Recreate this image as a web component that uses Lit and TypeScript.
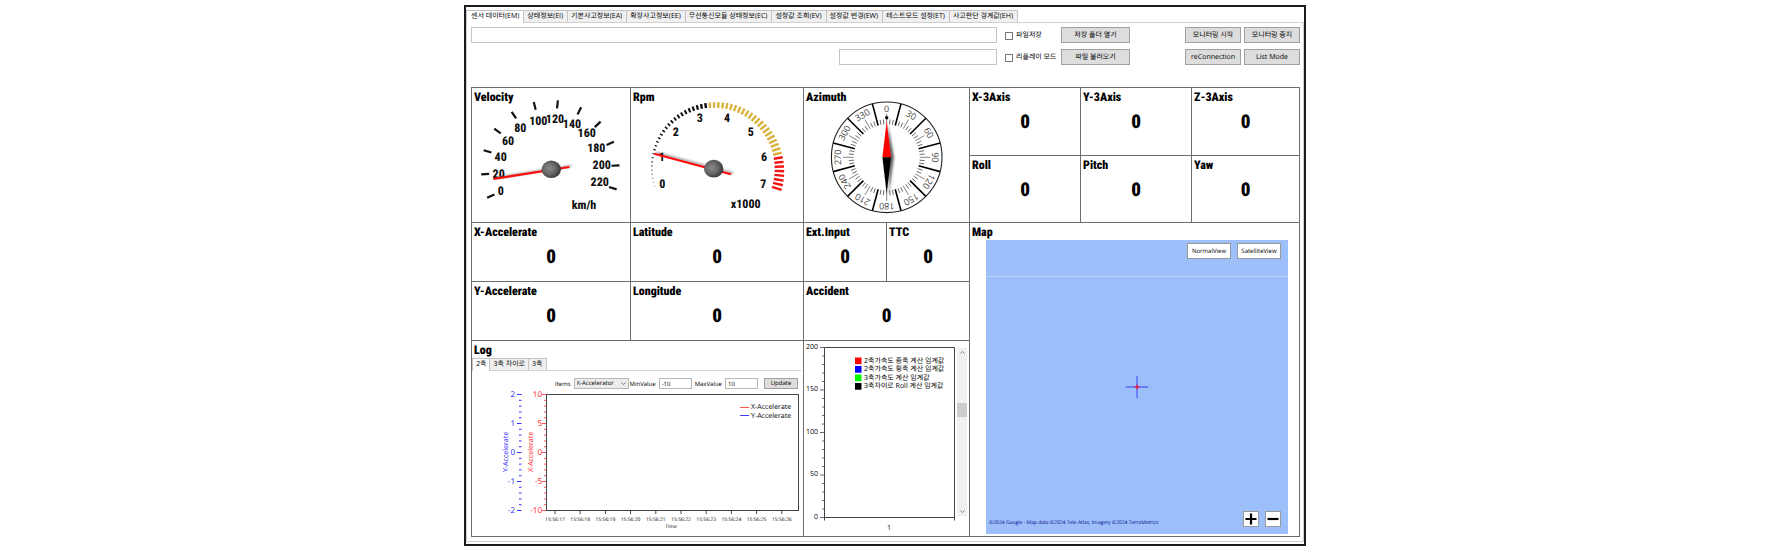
import { LitElement, html, svg, css } from "lit";
import { customElement, state } from "lit/decorators.js";

const polar = (cx: number, cy: number, r: number, deg: number) => {
  const a = (deg * Math.PI) / 180;
  return [cx + r * Math.cos(a), cy + r * Math.sin(a)];
};

const tick = (cx: number, cy: number, r1: number, r2: number, deg: number, color: string, width: number) => {
  const [x1, y1] = polar(cx, cy, r1, deg);
  const [x2, y2] = polar(cx, cy, r2, deg);
  return svg`<line x1=${x1} y1=${y1} x2=${x2} y2=${y2} stroke=${color} stroke-width=${width} />`;
};

const range = (n: number) => Array.from({ length: n }, (_, i) => i);

const TABS = [
  "센서 데이터(EM)",
  "상태정보(EI)",
  "기본사고정보(EA)",
  "확장사고정보(EE)",
  "무선통신모듈 상태정보(EC)",
  "설정값 조회(EV)",
  "설정값 변경(EW)",
  "테스트모드 설정(ET)",
  "사고판단 경계값(EH)",
];

const LOG_TABS = ["2축", "3축 자이로", "3축"];

const AXES = ["X-3Axis", "Y-3Axis", "Z-3Axis", "Roll", "Pitch", "Yaw"];

const SPEED_LABELS: [number, number, number][] = [
  [0, 28.7, 103], [20, 26.7, 85.7], [40, 28.7, 68.7], [60, 36, 52.7],
  [80, 48.3, 39.7], [100, 66.3, 32.7], [120, 83, 31], [140, 100, 35.7],
  [160, 114.7, 45.3], [180, 124.3, 60.3], [200, 129.7, 77], [220, 127.7, 94.3],
];

const RPM_LABELS: [number, number, number][] = [
  [0, 31.3, 96.3], [1, 30.7, 68.7], [2, 44.7, 44.3], [3, 68.7, 30],
  [4, 96, 30], [5, 119.7, 44.3], [6, 133, 68.7], [7, 132.3, 96],
];

const THRESHOLDS = [
  ["#ff0000", "2축가속도 종축 계산 임계값"],
  ["#0000ff", "2축가속도 횡축 계산 임계값"],
  ["#00ff00", "3축가속도 계산 임계값"],
  ["#000000", "3축자이로 Roll 계산 임계값"],
];

const gaugeStyles = css`
  :host {
    display: block;
  }
  .dial {
    display: block;
    width: 100%;
    height: auto;
    overflow: hidden;
  }
  .num {
    font: 800 12px "Impact", "Roboto Condensed", "Roboto", sans-serif;
    text-anchor: middle;
    dominant-baseline: central;
    fill: #111;
  }
  .bearing {
    font: 9px "Open Sans", "Noto Sans", sans-serif;
    text-anchor: middle;
    dominant-baseline: central;
    fill: #444;
  }
`;

const defs = svg`
  <defs>
    <radialGradient id="hub" cx="0.4" cy="0.45" r="0.62">
      <stop offset="0" stop-color="#8a8a8a" />
      <stop offset="0.55" stop-color="#666" />
      <stop offset="1" stop-color="#333" />
    </radialGradient>
    <filter id="soft" x="-50%" y="-50%" width="200%" height="200%">
      <feGaussianBlur stdDeviation="1.3" />
    </filter>
  </defs>`;

const needle = (x1: number, y1: number, x2: number, y2: number) => svg`
  <line x1=${x1 + 2} y1=${y1 - 1} x2=${x2 + 2} y2=${y2 - 1} stroke="#000" stroke-opacity="0.4"
    stroke-width="2" filter="url(#soft)" />
  <line x1=${x1} y1=${y1} x2=${x2} y2=${y2} stroke="#ff0a0a" stroke-width="2.2" />`;

@customElement("speed-gauge")
class SpeedGauge extends LitElement {
  static styles = gaugeStyles;
  render() {
    return html`<svg class="dial" viewBox="0 0 158 134" role="img" aria-label="Velocity">
      ${defs}
      ${range(12).map((i) => tick(78.3, 81.3, 61.3, 69.3, 155.7 + i * 20.1, "#111", 2.2))}
      ${SPEED_LABELS.map(([v, x, y]) => svg`<text class="num" x=${x} y=${y}>${v}</text>`)}
      <text class="num" x="112" y="116.7">km/h</text>
      ${needle(21.3, 91, 97.3, 79)}
      <ellipse cx="79.3" cy="81.3" rx="9.7" ry="8.7" fill="url(#hub)" />
    </svg>`;
  }
}

@customElement("rpm-gauge")
class RpmGauge extends LitElement {
  static styles = gaugeStyles;
  render() {
    const color = (i: number) => (i < 27 ? "#111" : i < 49 ? "#d8b23c" : "#f51414");
    return html`<svg class="dial" viewBox="0 0 172 134" role="img" aria-label="Rpm">
      ${defs}
      ${range(57).map((i) =>
        tick(82.7, 80.7, 61, 61.8 + (i * 9.4) / 56, 163.4 + i * 3.82, color(i), 0.5 + (i > 26 ? 1.9 : i * 0.075)))}
      ${RPM_LABELS.map(([v, x, y]) => svg`<text class="num" x=${x} y=${y}>${v}</text>`)}
      <text class="num" x="114.7" y="116">x1000</text>
      ${needle(23.3, 65.7, 100, 86.3)}
      <ellipse cx="82.7" cy="80.7" rx="9.7" ry="8.9" fill="url(#hub)" />
    </svg>`;
  }
}

@customElement("azimuth-gauge")
class AzimuthGauge extends LitElement {
  static styles = gaugeStyles;
  render() {
    const c = [82.7, 69.3];
    return html`<svg class="dial" viewBox="0 0 165 134" role="img" aria-label="Azimuth">
      ${defs}
      <circle cx=${c[0]} cy=${c[1]} r="55.3" fill="#fff" stroke="#222" stroke-width="1.1" />
      ${range(72).map((i) => {
        const deg = i * 5;
        if (deg % 30 === 15) return tick(c[0], c[1], 33, 55.3, deg, "#000", 1.6);
        if (deg % 30 === 0) return tick(c[0], c[1], 33, 43.5, deg, "#666", 0.8);
        return tick(c[0], c[1], 33, 38, deg, "#444", 0.8);
      })}
      ${range(12).map((i) => svg`<g transform="rotate(${i * 30} ${c[0]} ${c[1]})">
        <text class="bearing" x=${c[0]} y="20.3">${i * 30}</text></g>`)}
      <circle cx=${c[0]} cy="29.7" r="1.7" fill="#000" />
      <path d="M84 36 L90 69 L85 106 Z" fill="#000" fill-opacity="0.6" filter="url(#soft)" />
      <path d="M82.7 33 L87 69.3 H78.4 Z" fill="#f00" />
      <path d="M78.4 69.3 H87 L82.7 106 Z" fill="#000" />
    </svg>`;
  }
}

@customElement("log-chart")
class LogChart extends LitElement {
  static styles = css`
    :host {
      display: block;
    }
    .plot {
      display: block;
      width: 100%;
      height: auto;
      overflow: visible;
    }
    .lbl {
      font: 7px "Open Sans", "Noto Sans", sans-serif;
      dominant-baseline: central;
    }
    .small {
      font-size: 5px;
    }
    .val {
      font-size: 8px;
    }
    .end {
      text-anchor: end;
    }
    .mid {
      text-anchor: middle;
    }
    .red {
      fill: #ff1010;
    }
    .blue {
      fill: #1a1aff;
    }
    .dark {
      fill: #000;
    }
  `;
  render() {
    const y = (i: number) => 4 + (i * 116) / 20;
    return html`<svg class="plot" viewBox="0 0 331 145" role="img" aria-label="Accelerate log">
      <rect x="74.5" y="4.5" width="252" height="116" fill="#fff" stroke="#444" />
      ${range(21).map((i) => svg`
        <line x1=${i % 5 ? 47 : 45} x2="49.5" y1=${y(i) + 0.5} y2=${y(i) + 0.5} stroke="#3030ff" />
        <line x1=${i % 5 ? 72 : 70} x2="74" y1=${y(i) + 0.5} y2=${y(i) + 0.5} stroke="#ff2a2a" stroke-width="0.8" />`)}
      ${[2, 1, 0, -1, -2].map((v, i) => svg`<text class="lbl val blue end" x="43" y=${4 + i * 29}>${v}</text>`)}
      ${[10, 5, 0, -5, -10].map((v, i) => svg`<text class="lbl val red end" x="70" y=${4 + i * 29}>${v}</text>`)}
      <g transform="translate(34 62) rotate(-90)"><text class="lbl blue mid">Y-Accelerate</text></g>
      <g transform="translate(59 62) rotate(-90)"><text class="lbl red mid">X-Accelerate</text></g>
      ${range(10).map((i) => svg`
        <line x1=${83 + i * 25.2} x2=${83 + i * 25.2} y1="120" y2="124" stroke="#444" />
        <text class="lbl small dark mid" x=${83 + i * 25.2} y="130">15:56:${17 + i}</text>`)}
      <text class="lbl small dark mid" x="199" y="137">Time</text>
      <line x1="268" x2="277" y1="17.5" y2="17.5" stroke="#ff5050" />
      <text class="lbl dark" x="279" y="17">X-Accelerate</text>
      <line x1="268" x2="277" y1="25.5" y2="25.5" stroke="#4040ff" />
      <text class="lbl dark" x="279" y="26">Y-Accelerate</text>
    </svg>`;
  }
}

@customElement("threshold-chart")
class ThresholdChart extends LitElement {
  static styles = css`
    :host {
      display: block;
    }
    .plot {
      display: block;
      width: 100%;
      height: auto;
      overflow: visible;
    }
    .lbl {
      font: 7px "Open Sans", "Noto Sans", "Noto Sans CJK KR", sans-serif;
      dominant-baseline: central;
      fill: #000;
    }
    .end {
      text-anchor: end;
    }
    .mid {
      text-anchor: middle;
    }
  `;
  render() {
    return html`<svg class="plot" viewBox="0 0 152 195" role="img" aria-label="Thresholds">
      <path d="M20.5 179.5 V6.5 H150.5 V179.5 M20.5 176.5 H150.5" fill="none" stroke="#444" />
      ${range(21).map((i) => svg`<line x1=${i % 5 ? 18 : 16} x2="20" y1=${6.5 + i * 8.5} y2=${6.5 + i * 8.5}
        stroke="#444" stroke-width="0.8" />`)}
      ${[200, 150, 100, 50, 0].map((v, i) => svg`<text class="lbl end" x="14" y=${6 + i * 42.5}>${v}</text>`)}
      <text class="lbl mid" x="85" y="187">1</text>
      ${THRESHOLDS.map(([c, t], i) => svg`
        <rect x="51" y=${16.5 + i * 8.5} width="6.5" height="6.7" fill=${c} />
        <text class="lbl" x="60" y=${20 + i * 8.5}>${t}</text>`)}
    </svg>`;
  }
}

@customElement("app-root")
class AppRoot extends LitElement {
  @state() private tab = 0;
  @state() private logTab = 0;

  static styles = css`
    :host {
      display: block;
      padding: 5px 7px 5px 5px;
      background: #fff;
      color: #000;
      font: 7px/12px "Open Sans", "Noto Sans", "Noto Sans CJK KR", sans-serif;
      text-rendering: geometricPrecision;
    }
    * {
      box-sizing: border-box;
    }
    button,
    input,
    select {
      font: inherit;
      color: inherit;
      margin: 0;
      border-radius: 0;
      min-width: 0;
      text-rendering: inherit;
    }
    .frame {
      max-width: 842px;
      margin: 0 auto;
      border: 2px solid #1c1a1c;
      padding: 3px 0 2px 0;
    }
    .tabs {
      display: flex;
      align-items: flex-end;
    }
    .tab {
      height: 12px;
      padding: 1px 4px 0 3px;
      border: 1px solid #c4c4c4;
      border-bottom: 0;
      border-left-width: 0;
      background: #f0f0f0;
      line-height: 10px;
      white-space: nowrap;
    }
    .tab.on {
      height: 13px;
      padding: 0 4px;
      border-left-width: 1px;
      background: #fff;
      margin-bottom: -1px;
      position: relative;
    }
    .pane {
      border: 1px solid #d0d0d0;
      padding: 4px 3px 4px 4px;
    }
    .tools {
      display: flex;
      margin-bottom: 22px;
    }
    .fields {
      flex: 1;
      display: grid;
      gap: 6px;
      justify-items: end;
      margin-right: 8px;
    }
    .box {
      height: 16px;
      width: 100%;
      border: 1px solid #c4c4c4;
      background: #fff;
    }
    .box.short {
      width: 30%;
    }
    .files {
      display: grid;
      grid-template-columns: 56px 69px;
      row-gap: 6px;
      margin-right: 55px;
    }
    .actions {
      display: grid;
      grid-template-columns: 56px 56px;
      gap: 6px 3px;
    }
    .check {
      display: flex;
      align-items: center;
      gap: 3px;
      padding-top: 1px;
      white-space: nowrap;
    }
    .check input {
      appearance: none;
      width: 8px;
      height: 8px;
      border: 1px solid #777;
      background: #fff;
    }
    .btn {
      height: 16px;
      padding: 1px 0 0;
      border: 1px solid #a0a0a0;
      background: #ddd;
      line-height: 12px;
      white-space: nowrap;
    }
    .board {
      display: grid;
      grid-template-columns: 159fr 173fr 166fr 330fr;
      border: solid #6e6e6e;
      border-width: 1px 0 0 1px;
    }
    .cell {
      min-width: 0;
      border: solid #6e6e6e;
      border-width: 0 1px 1px 0;
    }
    .gauge {
      display: grid;
    }
    .gauge > * {
      grid-area: 1 / 1;
    }
    .title {
      margin: 0;
      padding: 1px 0 0 2px;
      font: 900 12px/16px "Impact", "Roboto Condensed", "Roboto", sans-serif;
      color: #000;
    }
    .value {
      display: block;
      text-align: center;
      font: 900 19px/24px "Impact", "Roboto Condensed", "Roboto", sans-serif;
      color: #000;
      padding: 5px 0 12px;
    }
    .axes {
      display: grid;
      grid-template-columns: 111fr 111fr 108fr;
    }
    .axes .cell {
      padding-bottom: 8px;
    }
    .pair {
      display: grid;
      grid-template-columns: 1fr 1fr;
    }
    .wide {
      grid-column: span 2;
    }
    .log {
      display: flex;
      flex-direction: column;
    }
    .logtabs {
      display: flex;
      align-items: flex-end;
      border-bottom: 1px solid #d0d0d0;
      margin-right: 2px;
    }
    .logtabs .tab {
      padding: 0 3px;
    }
    .controls {
      display: flex;
      align-items: center;
      justify-content: flex-end;
      margin: 7px 5px 1px 0;
      font-size: 6px;
      line-height: 10px;
    }
    .controls .ctl {
      height: 11px;
      border: 1px solid #b8b8b8;
      padding: 0 2px;
      background: #fff;
      line-height: 9px;
    }
    .controls select.ctl {
      appearance: none;
      width: 55px;
      margin: 0 1px 0 3px;
      background: #ececec;
    }
    .controls input.ctl {
      width: 33px;
      margin: 0 3px;
    }
    .controls .btn {
      width: 34px;
      height: 11px;
      padding: 0;
      line-height: 9px;
      margin-left: 3px;
    }
    .picker {
      display: grid;
      align-items: center;
      justify-items: end;
    }
    .picker > * {
      grid-area: 1 / 1;
    }
    .caret {
      width: 5px;
      height: 3px;
      margin-right: 4px;
      pointer-events: none;
    }
    .bars {
      display: flex;
      align-items: flex-start;
    }
    .bars threshold-chart {
      flex: 1;
      min-width: 0;
    }
    .scroll {
      width: 10px;
      height: 168px;
      margin: 7px 2px 0 1px;
      background: #f0f0f0;
      display: flex;
      flex-direction: column;
      align-items: center;
      justify-content: space-between;
      padding: 3px 0;
    }
    .thumb {
      width: 10px;
      height: 14px;
      margin-bottom: 44px;
      background: #cdcdcd;
    }
    .arrow {
      width: 5px;
      height: 3px;
    }
    .mapcell {
      grid-column: 4;
      grid-row: 2 / span 3;
      display: flex;
      flex-direction: column;
    }
    .map {
      flex: 1;
      display: flex;
      flex-direction: column;
      justify-content: space-between;
      position: relative;
      margin: 0 11px 2px 16px;
      padding: 3px 7px 7px 3px;
      background: #9cbffa;
    }
    .seam {
      position: absolute;
      left: 0;
      right: 0;
      top: 36px;
      height: 1px;
      background: #b9d3fb;
    }
    .cross {
      position: absolute;
      left: 50%;
      top: 50%;
      width: 23px;
      height: 23px;
      transform: translate(-50%, -50%);
    }
    .views,
    .bottom {
      display: flex;
      justify-content: flex-end;
      gap: 6px;
    }
    .mapbtn {
      height: 16px;
      width: 44px;
      padding: 0;
      border: 1px solid #999;
      background: #fff;
      font-size: 6px;
      line-height: 14px;
      white-space: nowrap;
    }
    .zoom {
      width: 16px;
      display: grid;
      place-items: center;
    }
    .credit {
      flex: 1;
      align-self: flex-end;
      font-size: 5px;
      line-height: 8px;
      color: #00008b;
      white-space: nowrap;
    }
  `;

  private metric(name: string) {
    return html`<h2 class="title">${name}</h2><output class="value" aria-label=${name}>0</output>`;
  }

  private tabButtons(names: string[], current: number, pick: (i: number) => void) {
    return names.map((t, i) => html`<button class="tab ${i === current ? "on" : ""}" role="tab"
      aria-selected=${i === current} @click=${() => pick(i)}>${t}</button>`);
  }

  render() {
    return html`<main class="frame">
      <nav class="tabs" role="tablist">${this.tabButtons(TABS, this.tab, (i) => (this.tab = i))}</nav>
      <section class="pane">
        <div class="tools">
          <div class="fields">
            <input class="box" type="text" aria-label="저장 폴더" />
            <input class="box short" type="text" aria-label="파일" />
          </div>
          <div class="files">
            <label class="check"><input type="checkbox" />파일저장</label>
            <button class="btn">저장 폴더 열기</button>
            <label class="check"><input type="checkbox" />리플레이 모드</label>
            <button class="btn">파일 불러오기</button>
          </div>
          <div class="actions">
            <button class="btn">모니터링 시작</button>
            <button class="btn">모니터링 중지</button>
            <button class="btn">reConnection</button>
            <button class="btn">List Mode</button>
          </div>
        </div>

        <div class="board">
          <div class="cell gauge"><speed-gauge></speed-gauge><h2 class="title">Velocity</h2></div>
          <div class="cell gauge"><rpm-gauge></rpm-gauge><h2 class="title">Rpm</h2></div>
          <div class="cell gauge"><azimuth-gauge></azimuth-gauge><h2 class="title">Azimuth</h2></div>
          <div class="axes">${AXES.map((a) => html`<div class="cell">${this.metric(a)}</div>`)}</div>

          <div class="cell">${this.metric("X-Accelerate")}</div>
          <div class="cell">${this.metric("Latitude")}</div>
          <div class="pair">
            <div class="cell">${this.metric("Ext.Input")}</div>
            <div class="cell">${this.metric("TTC")}</div>
          </div>
          <div class="cell">${this.metric("Y-Accelerate")}</div>
          <div class="cell">${this.metric("Longitude")}</div>
          <div class="cell">${this.metric("Accident")}</div>

          <div class="cell wide log">
            <h2 class="title">Log</h2>
            <div class="logtabs" role="tablist">
              ${this.tabButtons(LOG_TABS, this.logTab, (i) => (this.logTab = i))}
            </div>
            <div class="controls">
              <label for="items">Items</label>
              <span class="picker">
                <select class="ctl" id="items"><option>X-Accelerator</option><option>Y-Accelerator</option></select>
                <svg class="caret" viewBox="0 0 5 3"><path d="M0.5 0.5 L2.5 2.5 L4.5 0.5" fill="none" stroke="#555" stroke-width="0.8" /></svg>
              </span>
              <label for="min">MinValue</label>
              <input class="ctl" id="min" type="text" value="-10" />
              <label for="max">MaxValue</label>
              <input class="ctl" id="max" type="text" value="10" />
              <button class="btn">Update</button>
            </div>
            <log-chart></log-chart>
          </div>

          <div class="cell bars">
            <threshold-chart></threshold-chart>
            <div class="scroll">
              <svg class="arrow" viewBox="0 0 5 3"><path d="M0.5 2.5 L2.5 0.5 L4.5 2.5" fill="none" stroke="#777" stroke-width="0.8" /></svg>
              <div class="thumb"></div>
              <svg class="arrow" viewBox="0 0 5 3"><path d="M0.5 0.5 L2.5 2.5 L4.5 0.5" fill="none" stroke="#777" stroke-width="0.8" /></svg>
            </div>
          </div>

          <div class="cell mapcell">
            <h2 class="title">Map</h2>
            <div class="map">
              <div class="seam"></div>
              <svg class="cross" viewBox="0 0 23 23">
                <path d="M11.5 0 V23 M0 11.5 H23" stroke="#5a68f5" stroke-width="1.4" />
                <path d="M11.5 9 V14 M9 11.5 H14" stroke="#e0204a" stroke-width="1.4" />
              </svg>
              <div class="views">
                <button class="mapbtn">NormalView</button>
                <button class="mapbtn">SatelliteView</button>
              </div>
              <div class="bottom">
                <span class="credit">©2024 Google - Map data ©2024 Tele Atlas, Imagery ©2024 TerraMetrics</span>
                <button class="mapbtn zoom" aria-label="Zoom in">
                  <svg width="12" height="12" viewBox="0 0 12 12"><path d="M6 0.5 V11.5 M0.5 6 H11.5" stroke="#000" stroke-width="2.2" /></svg>
                </button>
                <button class="mapbtn zoom" aria-label="Zoom out">
                  <svg width="12" height="12" viewBox="0 0 12 12"><path d="M0.5 6 H11.5" stroke="#000" stroke-width="2.2" /></svg>
                </button>
              </div>
            </div>
          </div>
        </div>
      </section>
    </main>`;
  }
}
